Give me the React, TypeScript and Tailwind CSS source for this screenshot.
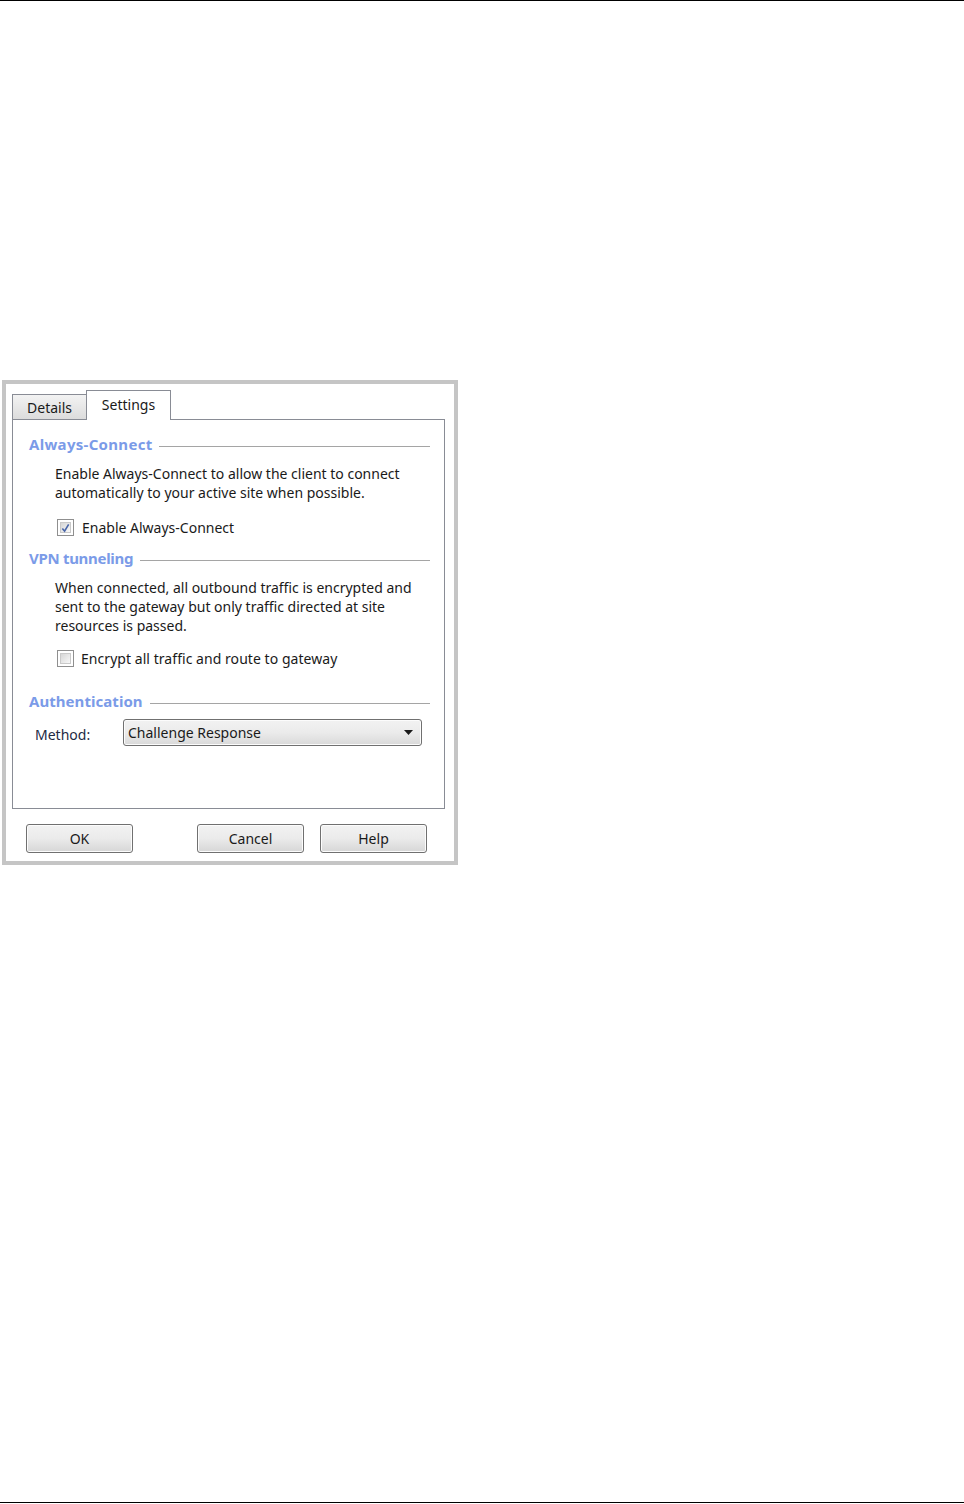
import React from "react";

const font = { fontFamily: '"Noto Sans", "Open Sans", Arial, sans-serif' };

function Header({ text, mt, track }: { text: string; mt: string; track: string }) {
  return (
    <div className={`flex items-center h-[20px] ${mt}`}>
      <span className={`text-[15px] font-bold leading-[20px] text-[#7b9be8] ${track}`}>{text}</span>
      <div className="flex-1 h-px bg-[#a5a5a5] ml-[7px] mt-[5px]" />
    </div>
  );
}

function CheckBox({ checked }: { checked: boolean }) {
  return (
    <div className="w-[17px] h-[17px] border border-[#8f8f8f] bg-white p-[2px] flex-none">
      <div className="w-full h-full bg-gradient-to-br from-[#d6d6d6] to-[#f8f8f8] border border-[#c9c9c9] flex items-center justify-center">
        {checked && (
          <svg width="10" height="10" viewBox="0 0 10 10">
            <path d="M1.5 5.5 L4 8.5 L8.5 1" fill="none" stroke="#4865a8" strokeWidth="1.8" />
          </svg>
        )}
      </div>
    </div>
  );
}

function Button({ label, w, ml }: { label: string; w: string; ml: string }) {
  return (
    <div
      className={`${w} ${ml} h-[29px] rounded-[3px] border border-[#707070] bg-gradient-to-b from-[#f2f2f2] via-[#ebebeb] to-[#d6d6d6] flex items-center justify-center text-[14px] text-[#1a1a1a] shadow-[inset_0_0_0_1px_#fcfcfc]`}
    >
      {label}
    </div>
  );
}

export default function App() {
  return (
    <div className="w-[964px] h-[1504px] bg-white flex flex-col relative text-[#1a1a1a]" style={font}>
      <div className="h-px bg-black w-full" />
      <div className="h-[379px]" />
      <div className="ml-[2px] w-[456px] h-[485px] border-4 border-[#c5c5c5] bg-white pl-[6px] pt-[6px] flex flex-col">
        {/* tabs */}
        <div className="flex items-end h-[29px] relative z-10">
          <div className="w-[75px] h-[25px] border border-b-0 border-[#898c95] bg-gradient-to-b from-[#f3f3f3] to-[#dcdcdc] flex items-center justify-center text-[14px] pt-[1px] -mr-px">
            Details
          </div>
          <div className="w-[85px] h-[30px] -mb-px border border-b-0 border-[#898c95] bg-white flex items-center justify-center text-[14px] pb-[3px]">
            Settings
          </div>
        </div>
        {/* panel */}
        <div className="w-[433px] h-[390px] border border-[#898c95] bg-white pl-[16px] pr-[14px]">
          <div className="h-[14px]" />
          <Header text="Always-Connect" mt="" track="tracking-[0.3px]" />
          <div className="ml-[26px] mt-[10px] text-[14px] leading-[19px]">
            <div>Enable Always-Connect to allow the client to connect</div>
            <div>automatically to your active site when possible.</div>
          </div>
          <div className="ml-[28px] mt-[16px] h-[19px] flex items-center gap-[8px] text-[14px]">
            <CheckBox checked />
            <span>Enable Always-Connect</span>
          </div>
          <Header text="VPN tunneling" mt="mt-[11px]" track="tracking-[-0.3px]" />
          <div className="ml-[26px] mt-[10px] text-[14px] leading-[19px]">
            <div>When connected, all outbound traffic is encrypted and</div>
            <div>sent to the gateway but only traffic directed at site</div>
            <div>resources is passed.</div>
          </div>
          <div className="ml-[28px] mt-[14px] h-[19px] flex items-center gap-[7px] text-[14px] tracking-[0.05px]">
            <CheckBox checked={false} />
            <span>Encrypt all traffic and route to gateway</span>
          </div>
          <Header text="Authentication" mt="mt-[23px]" track="tracking-[0.05px]" />
          <div className="mt-[8px] flex items-center h-[27px]">
            <span className="ml-[6px] w-[88px] text-[14px] text-[#1e2a44] pt-[3px]">Method:</span>
            <div className="w-[299px] h-[27px] rounded-[3px] border border-[#707070] bg-gradient-to-b from-[#f2f2f2] via-[#ebebeb] to-[#d9d9d9] flex items-center pl-[4px] pr-[8px] text-[14px] shadow-[inset_0_0_0_1px_#fcfcfc]">
              <span className="flex-1">Challenge Response</span>
              <svg width="9" height="5" viewBox="0 0 9 5">
                <path d="M0 0 H9 L4.5 5 Z" fill="#1a1a1a" />
              </svg>
            </div>
          </div>
        </div>
        {/* buttons */}
        <div className="flex mt-[15px]">
          <Button label="OK" w="w-[107px]" ml="ml-[14px]" />
          <Button label="Cancel" w="w-[107px]" ml="ml-[64px]" />
          <Button label="Help" w="w-[107px]" ml="ml-[16px]" />
        </div>
      </div>
      <div className="flex-1" />
      <div className="h-px bg-black w-full mb-[1px]" />
    </div>
  );
}
